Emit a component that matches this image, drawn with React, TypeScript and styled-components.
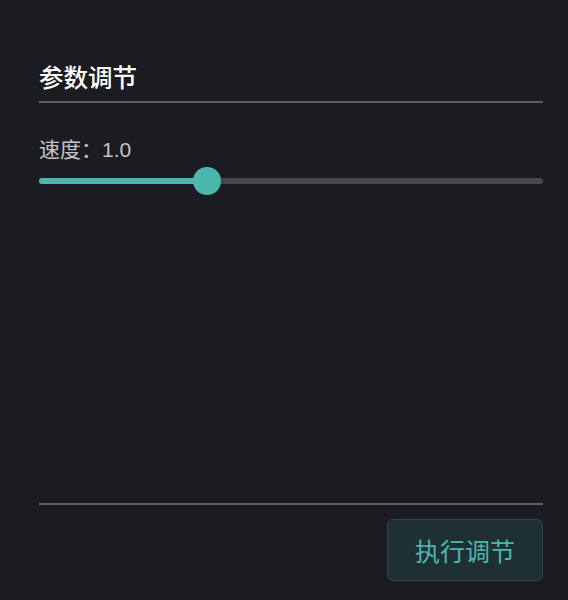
import { useState } from "react";
import styled, { createGlobalStyle } from "styled-components";

const GlobalStyle = createGlobalStyle`
  html, body {
    margin: 0;
    padding: 0;
    background: #1b1c21;
  }
  body {
    font-family: "Liberation Sans", "Noto Sans CJK SC", sans-serif;
  }
`;

const Page = styled.div`
  box-sizing: border-box;
  min-height: 100vh;
  padding: 60px 25px 19px 39px;
  display: flex;
  flex-direction: column;
`;

const Title = styled.h2`
  margin: 0;
  padding-bottom: 7px;
  font-family: "Noto Sans CJK SC", sans-serif;
  font-size: 24.5px;
  line-height: 34px;
  font-weight: 500;
  color: #ffffff;
  border-bottom: 2px solid #5c5c61;
`;

const Field = styled.div`
  margin-top: 32px;
  display: flex;
  flex-direction: column;
  gap: 13px;
`;

const Label = styled.div`
  font-size: 21px;
  line-height: 30px;
  color: #c4c4c6;
`;

const Track = styled.div`
  position: relative;
  height: 6px;
  border-radius: 3px;
  background: #47474b;
  cursor: pointer;
`;

const Fill = styled.div`
  height: 100%;
  border-radius: 3px;
  background: #4db6ac;
`;

const Thumb = styled.div`
  position: absolute;
  top: 50%;
  width: 28px;
  height: 28px;
  border-radius: 50%;
  background: #4db6ac;
  transform: translate(-50%, -50%);
`;

const Spacer = styled.div`
  flex: 1;
`;

const Footer = styled.div`
  border-top: 2px solid #5c5c61;
  padding-top: 14px;
  display: flex;
  justify-content: flex-end;
`;

const ActionBtn = styled.button`
  width: 156px;
  height: 62px;
  border: 1px solid #3b3f45;
  border-radius: 6px;
  background: #1f3034;
  color: #4db6ac;
  font-family: "Noto Sans CJK SC", sans-serif;
  font-size: 25px;
  cursor: pointer;
`;

const MIN = 0.5;
const MAX = 2.0;

const App = () => {
  const [speed] = useState(1.0);
  const pct = ((speed - MIN) / (MAX - MIN)) * 100;

  return (
    <>
      <GlobalStyle />
      <Page>
        <Title>参数调节</Title>
        <Field>
          <Label>速度：{speed.toFixed(1)}</Label>
          <Track>
            <Fill style={{ width: `${pct}%` }} />
            <Thumb style={{ left: `${pct}%` }} />
          </Track>
        </Field>
        <Spacer />
        <Footer>
          <ActionBtn>执行调节</ActionBtn>
        </Footer>
      </Page>
    </>
  );
};

export default App;
